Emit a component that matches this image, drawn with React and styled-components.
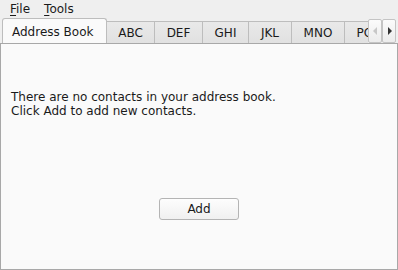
import React from 'react';
import styled, { createGlobalStyle } from 'styled-components';

const Global = createGlobalStyle`
  html, body { margin: 0; padding: 0; }
  body {
    width: 398px;
    height: 270px;
    overflow: hidden;
    background: #efefef;
    font-family: "DejaVu Sans", sans-serif;
    font-size: 12px;
    color: #1a1a1a;
  }
`

const Window = styled.div`
  width: 398px;
  height: 270px;
  display: flex;
  flex-direction: column;
  background: #efefef;
`

const MenuBar = styled.div`
  height: 18px;
  display: flex;
  align-items: center;
  padding-left: 3px;
`

const MenuItem = styled.div`
  padding: 0 7px;
  line-height: 18px;
  u { text-decoration: underline; text-underline-offset: 2px; }
`

const TabRow = styled.div`
  height: 25px;
  display: flex;
  align-items: flex-end;
  padding-left: 2px;
  position: relative;
  z-index: 1;
`

const TabStrip = styled.div`
  display: flex;
  align-items: flex-end;
  width: 366px;
  overflow: hidden;
`

const Tab = styled.div`
  flex: none;
  box-sizing: border-box;
  width: ${p => p.$w}px;
  height: ${p => (p.$active ? '26px' : '22px')};
  display: flex;
  align-items: center;
  justify-content: ${p => (p.$active ? 'flex-start' : 'center')};
  padding-left: ${p => (p.$active ? '9px' : '0')};
  border: 1px solid #bdbdbd;
  border-bottom: none;
  border-left: ${p => (p.$first ? '1px solid #bdbdbd' : 'none')};
  border-radius: ${p => (p.$active ? '3px 3px 0 0' : '0')};
  background: ${p => (p.$active ? '#fafafa' : 'linear-gradient(#e9e9e9, #e1e1e1)')};
  color: #1a1a1a;
  padding-top: ${p => (p.$active ? '0' : '1px')};
  margin-bottom: ${p => (p.$active ? '-1px' : '0')};
  white-space: nowrap;
`

const Scroller = styled.div`
  display: flex;
  align-items: flex-end;
  height: 25px;
`

const ScrollButton = styled.div`
  box-sizing: border-box;
  width: 14px;
  height: 24px;
  border: 1px solid #c4c4c4;
  border-radius: 2px;
  background: linear-gradient(#fbfbfb, #ececec);
  display: flex;
  align-items: center;
  justify-content: center;
`

const Pane = styled.div`
  flex: 1;
  width: 398px;
  box-sizing: border-box;
  border: 1px solid #a8a8a8;
  background: #fafafa;
  display: flex;
  flex-direction: column;
`

const Message = styled.div`
  margin: 46px 0 0 10px;
  line-height: 14px;
  font-size: 12px;
`

const Spacer = styled.div`
  flex: 1;
`

const ButtonRow = styled.div`
  display: flex;
  justify-content: center;
  margin-bottom: 49px;
`

const Button = styled.button`
  width: 80px;
  height: 22px;
  box-sizing: border-box;
  border: 1px solid #b4b4b4;
  border-radius: 3px;
  background: linear-gradient(#fdfdfd, #f0f0f0);
  font-family: "DejaVu Sans", sans-serif;
  font-size: 12px;
  color: #1a1a1a;
  padding: 0;
`

const Arrow = ({ dir, color }) => (
  <svg width="5" height="8" viewBox="0 0 5 8">
    {dir === 'left'
      ? <polygon points="4,0 4,8 0,4" fill={color} />
      : <polygon points="1,0 1,8 5,4" fill={color} />}
  </svg>
)

const tabs = [
  { label: 'ABC', w: 48 },
  { label: 'DEF', w: 48 },
  { label: 'GHI', w: 46 },
  { label: 'JKL', w: 43 },
  { label: 'MNO', w: 53 },
  { label: 'PQR', w: 49 },
  { label: 'STU', w: 48 },
]

export default function App() {
  return (
    <Window>
      <Global />
      <MenuBar>
        <MenuItem><u>F</u>ile</MenuItem>
        <MenuItem><u>T</u>ools</MenuItem>
      </MenuBar>
      <TabRow>
        <TabStrip>
          <Tab $active $first $w={105}>Address Book</Tab>
          {tabs.map(t => (
            <Tab key={t.label} $w={t.w}>{t.label}</Tab>
          ))}
        </TabStrip>
        <Scroller>
          <ScrollButton><Arrow dir="left" color="#c8c8c8" /></ScrollButton>
          <ScrollButton><Arrow dir="right" color="#333" /></ScrollButton>
        </Scroller>
      </TabRow>
      <Pane>
        <Message>
          There are no contacts in your address book.<br />
          Click Add to add new contacts.
        </Message>
        <Spacer />
        <ButtonRow>
          <Button>Add</Button>
        </ButtonRow>
      </Pane>
    </Window>
  )
}
